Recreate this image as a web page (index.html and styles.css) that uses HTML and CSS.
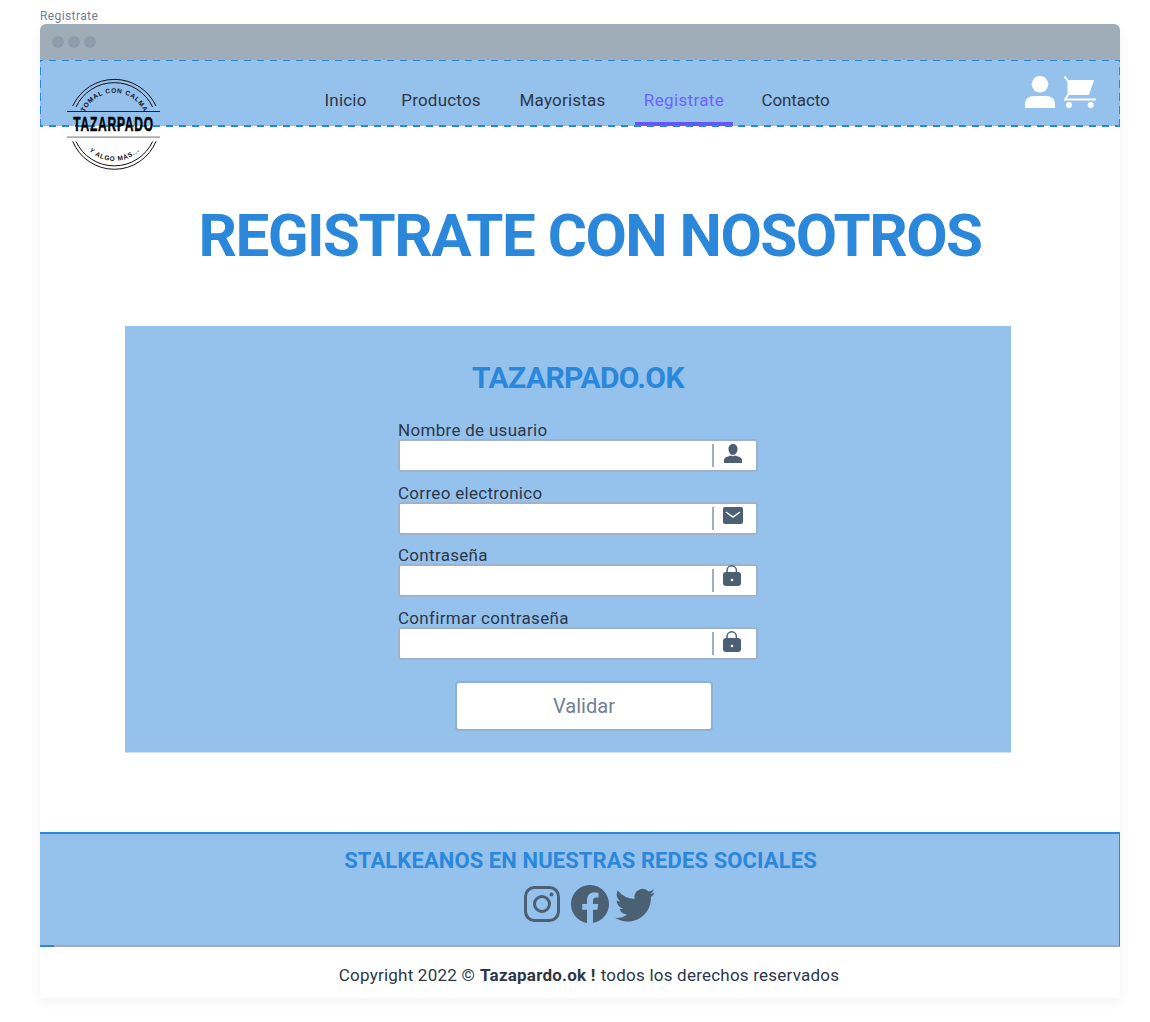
FILE: index.html
```html
<!DOCTYPE html>
<html lang="es">
<head>
<meta charset="utf-8">
<title>Registrate</title>
<link rel="stylesheet" href="styles.css">
</head>
<body>
<div class="crumb">Registrate</div>
<div class="frame">
  <div class="chrome"><i class="dot"></i><i class="dot"></i><i class="dot"></i></div>
  <header class="header">
    <svg class="logo" viewBox="0 0 100 96" width="100" height="96">
      <defs>
        <path id="arcTop" d="M18.300 41.600 A32.500 32.500 0 0 1 82.300 41.600"/>
        <path id="arcBot" d="M19.300 65.200 A36 36 0 0 0 81.300 65.200"/>
      </defs>
      <g fill="none" stroke="#111" stroke-width="1">
        <path d="M8.700 28 A45.900 45.900 0 0 1 92 28"/>
        <path d="M12 29 A42.300 42.300 0 0 1 88.600 29"/>
        <path d="M8.700 63.300 A45 45 0 0 0 92 63.300"/>
        <path d="M12 63.500 A42.300 42.300 0 0 0 88.600 63.500"/>
      </g>
      <rect x="3" y="33" width="93" height="1" fill="#222"/>
      <rect x="3" y="58.500" width="93" height="1.200" fill="#888"/>
      <text class="logo-small"><textPath href="#arcTop" startOffset="50%" text-anchor="middle">TOMAL CON CALMA</textPath></text>
      <text class="logo-small"><textPath href="#arcBot" startOffset="50%" text-anchor="middle">Y ALGO MÁS...</textPath></text>
      <text class="logo-name" transform="translate(9.300 53.300) scale(.6 1)" textLength="133" lengthAdjust="spacing">TAZARPADO</text>
    </svg>
    <nav class="nav">
      <a class="nav-link link-inicio" href="#">Inicio</a>
      <a class="nav-link link-productos" href="#">Productos</a>
      <a class="nav-link link-mayoristas" href="#">Mayoristas</a>
      <a class="nav-link link-registrate is-active" href="#">Registrate</a>
      <a class="nav-link link-contacto" href="#">Contacto</a>
    </nav>
    <div class="header-icons">
      <svg width="30" height="32" viewBox="0 0 30 32" fill="#fff"><circle cx="15" cy="8.300" r="8.300"/><path d="M0 32v-4c0-5 4-8 9-8h12c5 0 9 3 9 8v4z"/></svg>
      <svg width="32" height="32" viewBox="0 0 32 32"><path d="M.500.500L4 5" stroke="#fff" stroke-width="2" fill="none"/><path d="M3.500 4H30l-5 15H3.500z" fill="#fff"/><path d="M4 19l-3 4.500h31" stroke="#fff" stroke-width="2" fill="none"/><circle cx="5" cy="29" r="3" fill="#fff"/><circle cx="26.700" cy="29" r="3" fill="#fff"/></svg>
    </div>
  </header>
  <main class="main">
    <h1 class="title">REGISTRATE CON NOSOTROS</h1>
    <section class="card">
      <h2 class="card-title">TAZARPADO.OK</h2>
      <form class="form">
        <div class="field">
          <label class="label">Nombre de usuario</label>
          <div class="input-wrap"><input class="input" type="text"><span class="sep"></span>
            <svg class="field-icon" width="20" height="20" viewBox="0 0 20 20"><path d="M10 1c3 0 4.500 2.300 4.500 5S13 12 10 12 5.500 8.700 5.500 6 7 1 10 1zM1 20v-3c0-2 2-3 4-3.500l3-1c1 1 3 1 4 0l3 1c2 .5 4 1.500 4 3.500v3z" fill="#4b6073"/></svg></div>
        </div>
        <div class="field">
          <label class="label">Correo electronico</label>
          <div class="input-wrap"><input class="input" type="email"><span class="sep"></span>
            <svg class="field-icon" width="20" height="20" viewBox="0 0 20 20"><rect y="1" width="20" height="17" rx="2" fill="#4b6073"/><path d="M3 6l7 5 7-5" stroke="#fff" stroke-width="1.500" fill="none"/></svg></div>
        </div>
        <div class="field">
          <label class="label">Contraseña</label>
          <div class="input-wrap"><input class="input" type="password"><span class="sep"></span>
            <svg class="field-icon lock lock-high" width="20" height="21" viewBox="0 0 20 21"><path d="M5 8V5.500a4.700 4.700 0 0 1 9.400 0V8" stroke="#4b6073" stroke-width="1.500" fill="none"/><rect x="1" y="7" width="18" height="14" rx="3" fill="#4b6073"/><circle cx="10" cy="15" r="1.300" fill="#fff"/></svg></div>
        </div>
        <div class="field">
          <label class="label">Confirmar contraseña</label>
          <div class="input-wrap"><input class="input" type="password"><span class="sep"></span>
            <svg class="field-icon lock" width="20" height="21" viewBox="0 0 20 21"><path d="M5 8V5.500a4.700 4.700 0 0 1 9.400 0V8" stroke="#4b6073" stroke-width="1.500" fill="none"/><rect x="1" y="7" width="18" height="14" rx="3" fill="#4b6073"/><circle cx="10" cy="15" r="1.300" fill="#fff"/></svg></div>
        </div>
        <button class="submit" type="button">Validar</button>
      </form>
    </section>
  </main>
  <footer class="social">
    <h3 class="social-title">STALKEANOS EN NUESTRAS REDES SOCIALES</h3>
    <div class="social-icons">
      <svg width="36" height="36" viewBox="0 0 36 36" fill="none" stroke="#4b6073" stroke-width="3"><rect x="1.500" y="1.500" width="33" height="33" rx="9"/><circle cx="18" cy="18" r="7.500"/><circle cx="27.500" cy="8.500" r="2" fill="#4b6073" stroke="none"/></svg>
      <svg width="38" height="38" viewBox="0 0 16 16" fill="#4b6073"><path d="M16 8.049c0-4.446-3.582-8.050-8-8.050C3.580 0-.002 3.603-.002 8.050c0 4.017 2.926 7.347 6.750 7.951v-5.625h-2.030V8.050H6.750V6.275c0-2.017 1.195-3.131 3.022-3.131.876 0 1.791.157 1.791.157v1.980h-1.009c-.993 0-1.303.621-1.303 1.258v1.510h2.218l-.354 2.326H9.250V16c3.824-.604 6.750-3.934 6.750-7.951z"/></svg>
      <svg width="40" height="40" viewBox="0 0 16 16" fill="#4b6073"><path d="M5.026 15c6.038 0 9.341-5.003 9.341-9.334 0-.14 0-.282-.006-.422A6.685 6.685 0 0 0 16 3.542a6.658 6.658 0 0 1-1.889.518 3.301 3.301 0 0 0 1.447-1.817 6.533 6.533 0 0 1-2.087.793A3.286 3.286 0 0 0 7.875 6.030a9.325 9.325 0 0 1-6.767-3.429 3.289 3.289 0 0 0 1.018 4.382A3.323 3.323 0 0 1 .640 6.575v.045a3.288 3.288 0 0 0 2.632 3.218 3.203 3.203 0 0 1-.865.115 3.230 3.230 0 0 1-.614-.057 3.283 3.283 0 0 0 3.067 2.277A6.588 6.588 0 0 1 .780 13.580a6.320 6.320 0 0 1-.780-.045A9.344 9.344 0 0 0 5.026 15z"/></svg>
    </div>
  </footer>
  <div class="copyright">Copyright 2022 © <strong>Tazapardo.ok !</strong> todos los derechos reservados</div>
</div>
</body>
</html>
```
FILE: styles.css
```css
* { box-sizing: border-box; }
html, body { margin: 0; padding: 0; background: #fff; }
body {
  font-family: Roboto, "Liberation Sans", sans-serif;
  color: #2d3748;
  height: 1022px;
  padding: 0 30px 0 40px;
  overflow: hidden;
}
.crumb { height: 24px; padding-top: 9px; font-size: 12px; line-height: 14px; letter-spacing: .4px; color: #718096; }
.frame {
  width: 1080px;
  height: 974px;
  background: #fff;
  border-radius: 6px 6px 0 0;
  box-shadow: 0 4px 12px rgba(0, 0, 0, .05);
  display: flex;
  flex-direction: column;
}
.chrome {
  height: 36px;
  background: #9fadb9;
  border-radius: 6px 6px 0 0;
  display: flex;
  align-items: center;
  gap: 4px;
  padding-left: 12px;
}
.dot { width: 12px; height: 12px; border-radius: 50%; background: #8e9dac; }
.header {
  position: relative;
  height: 67px;
  display: flex;
  background: linear-gradient(#95c2ed, #95c2ed) 0 0 / 100% 66px no-repeat;
}
.header::after {
  content: "";
  position: absolute;
  inset: 0;
  pointer-events: none;
  background-image:
    repeating-linear-gradient(90deg, #2b87da 0 3px, transparent 3px 9px, #2b87da 9px 13px),
    repeating-linear-gradient(90deg, #2b87da 0 3px, transparent 3px 9px, #2b87da 9px 13px),
    repeating-linear-gradient(0deg, #2b87da 0 8px, transparent 8px 13px),
    repeating-linear-gradient(0deg, #2b87da 0 8px, transparent 8px 13px);
  background-repeat: no-repeat;
  background-size: 100% 1px, 100% 2px, 1px 100%, 1px 100%;
  background-position: 0 0, 0 100%, 0 0, 100% 0;
}
.logo { position: absolute; left: 24px; top: 18px; z-index: 2; }
.logo-small { font-family: "Liberation Sans", sans-serif; font-size: 6.500px; font-weight: 700; letter-spacing: .7px; fill: #111; }
.logo-name { font-family: "Liberation Sans", sans-serif; font-size: 20px; font-weight: 700; fill: #000; stroke: #000; stroke-width: .5px; }
.nav { display: flex; margin-left: 285px; height: 100%; }
.nav-link {
  display: flex;
  align-items: center;
  justify-content: center;
  font-size: 17px;
  letter-spacing: .2px;
  color: #2d3748;
  text-decoration: none;
  height: 100%;
  padding-top: 12px;
  white-space: nowrap;
}
.link-inicio { width: 41px; }
.link-productos { width: 78px; margin-left: 36px; }
.link-mayoristas { width: 85px; margin-left: 40px; }
.link-registrate { width: 98px; margin-left: 30px; }
.link-contacto { width: 67px; margin-left: 29px; letter-spacing: -.1px; }
.nav-link.is-active { color: #6c63ff; border-bottom: 4px solid #6357f7; height: calc(100% - 1px); padding-top: 17px; letter-spacing: .35px; }
.header-icons {
  margin-left: auto;
  display: flex;
  align-items: flex-start;
  gap: 9px;
  padding: 16px 24px 0 0;
}
.main { flex: 1; display: flex; flex-direction: column; align-items: flex-start; }
.title {
  margin: 74px 0 0;
  width: 100%;
  height: 125px;
  padding-left: 20px;
  font-size: 60px;
  line-height: 70px;
  letter-spacing: -1.500px;
  font-weight: 700;
  color: #2b87da;
  text-align: center;
}
.card {
  margin-left: 85px;
  width: 886px;
  height: 427px;
  padding-left: 20px;
  background: #95c2ed;
  border-bottom: 1px solid #cfe0f2;
  display: flex;
  flex-direction: column;
  align-items: center;
}
.card-title { margin: 34px 0 0; font-size: 30px; line-height: 36px; letter-spacing: -.6px; font-weight: 700; color: #2b87da; text-align: center; }
.form { margin-top: 26px; width: 360px; display: flex; flex-direction: column; }
.field { height: 62.500px; }
.label { display: block; height: 17px; font-size: 17px; line-height: 16px; letter-spacing: .3px; color: #2d3748; }
.input-wrap {
  height: 33px;
  background: #fff;
  border: 2px solid #9fb2c8;
  border-radius: 3px;
  display: flex;
  align-items: center;
}
.input { flex: 1; min-width: 0; height: 100%; border: 0; background: transparent; outline: 0; }
.sep { width: 2px; height: 23px; background: #a0aec0; }
.field-icon { margin: 0 13px 5px 9px; }
.field-icon.lock { margin: 0 14px 4px 8px; }
.field-icon.lock-high { margin-bottom: 10px; }
.submit {
  align-self: center;
  margin: 9px 0 0 12px;
  width: 258px;
  height: 50px;
  background: #fff;
  border: 2px solid #8fb0d0;
  border-radius: 4px;
  font-family: inherit;
  font-size: 20px;
  color: #718096;
}
.social {
  height: 115px;
  background: #95c2ed;
  border-top: 2px solid #2b87da;
  border-right: 1px solid #2b87da;
  border-bottom: 2px solid #9fadb9;
  position: relative;
  display: flex;
  flex-direction: column;
  align-items: center;
}
.social::after {
  content: "";
  position: absolute;
  left: 0;
  bottom: -2px;
  width: 14px;
  height: 2px;
  background: #2b87da;
}
.social-title { margin: 14px 0 0; padding-left: 2px; font-size: 22px; line-height: 26px; letter-spacing: .1px; font-weight: 700; color: #2b87da; }
.social-icons { display: flex; align-items: center; gap: 11px; margin-top: 10px; margin-left: 19px; }
.social-icons svg + svg + svg { margin-left: -5px; }
.copyright { height: 51px; padding: 4px 0 0 18px; display: flex; align-items: center; justify-content: center; gap: .3em; font-size: 17px; letter-spacing: .22px; color: #2d3748; }
```
